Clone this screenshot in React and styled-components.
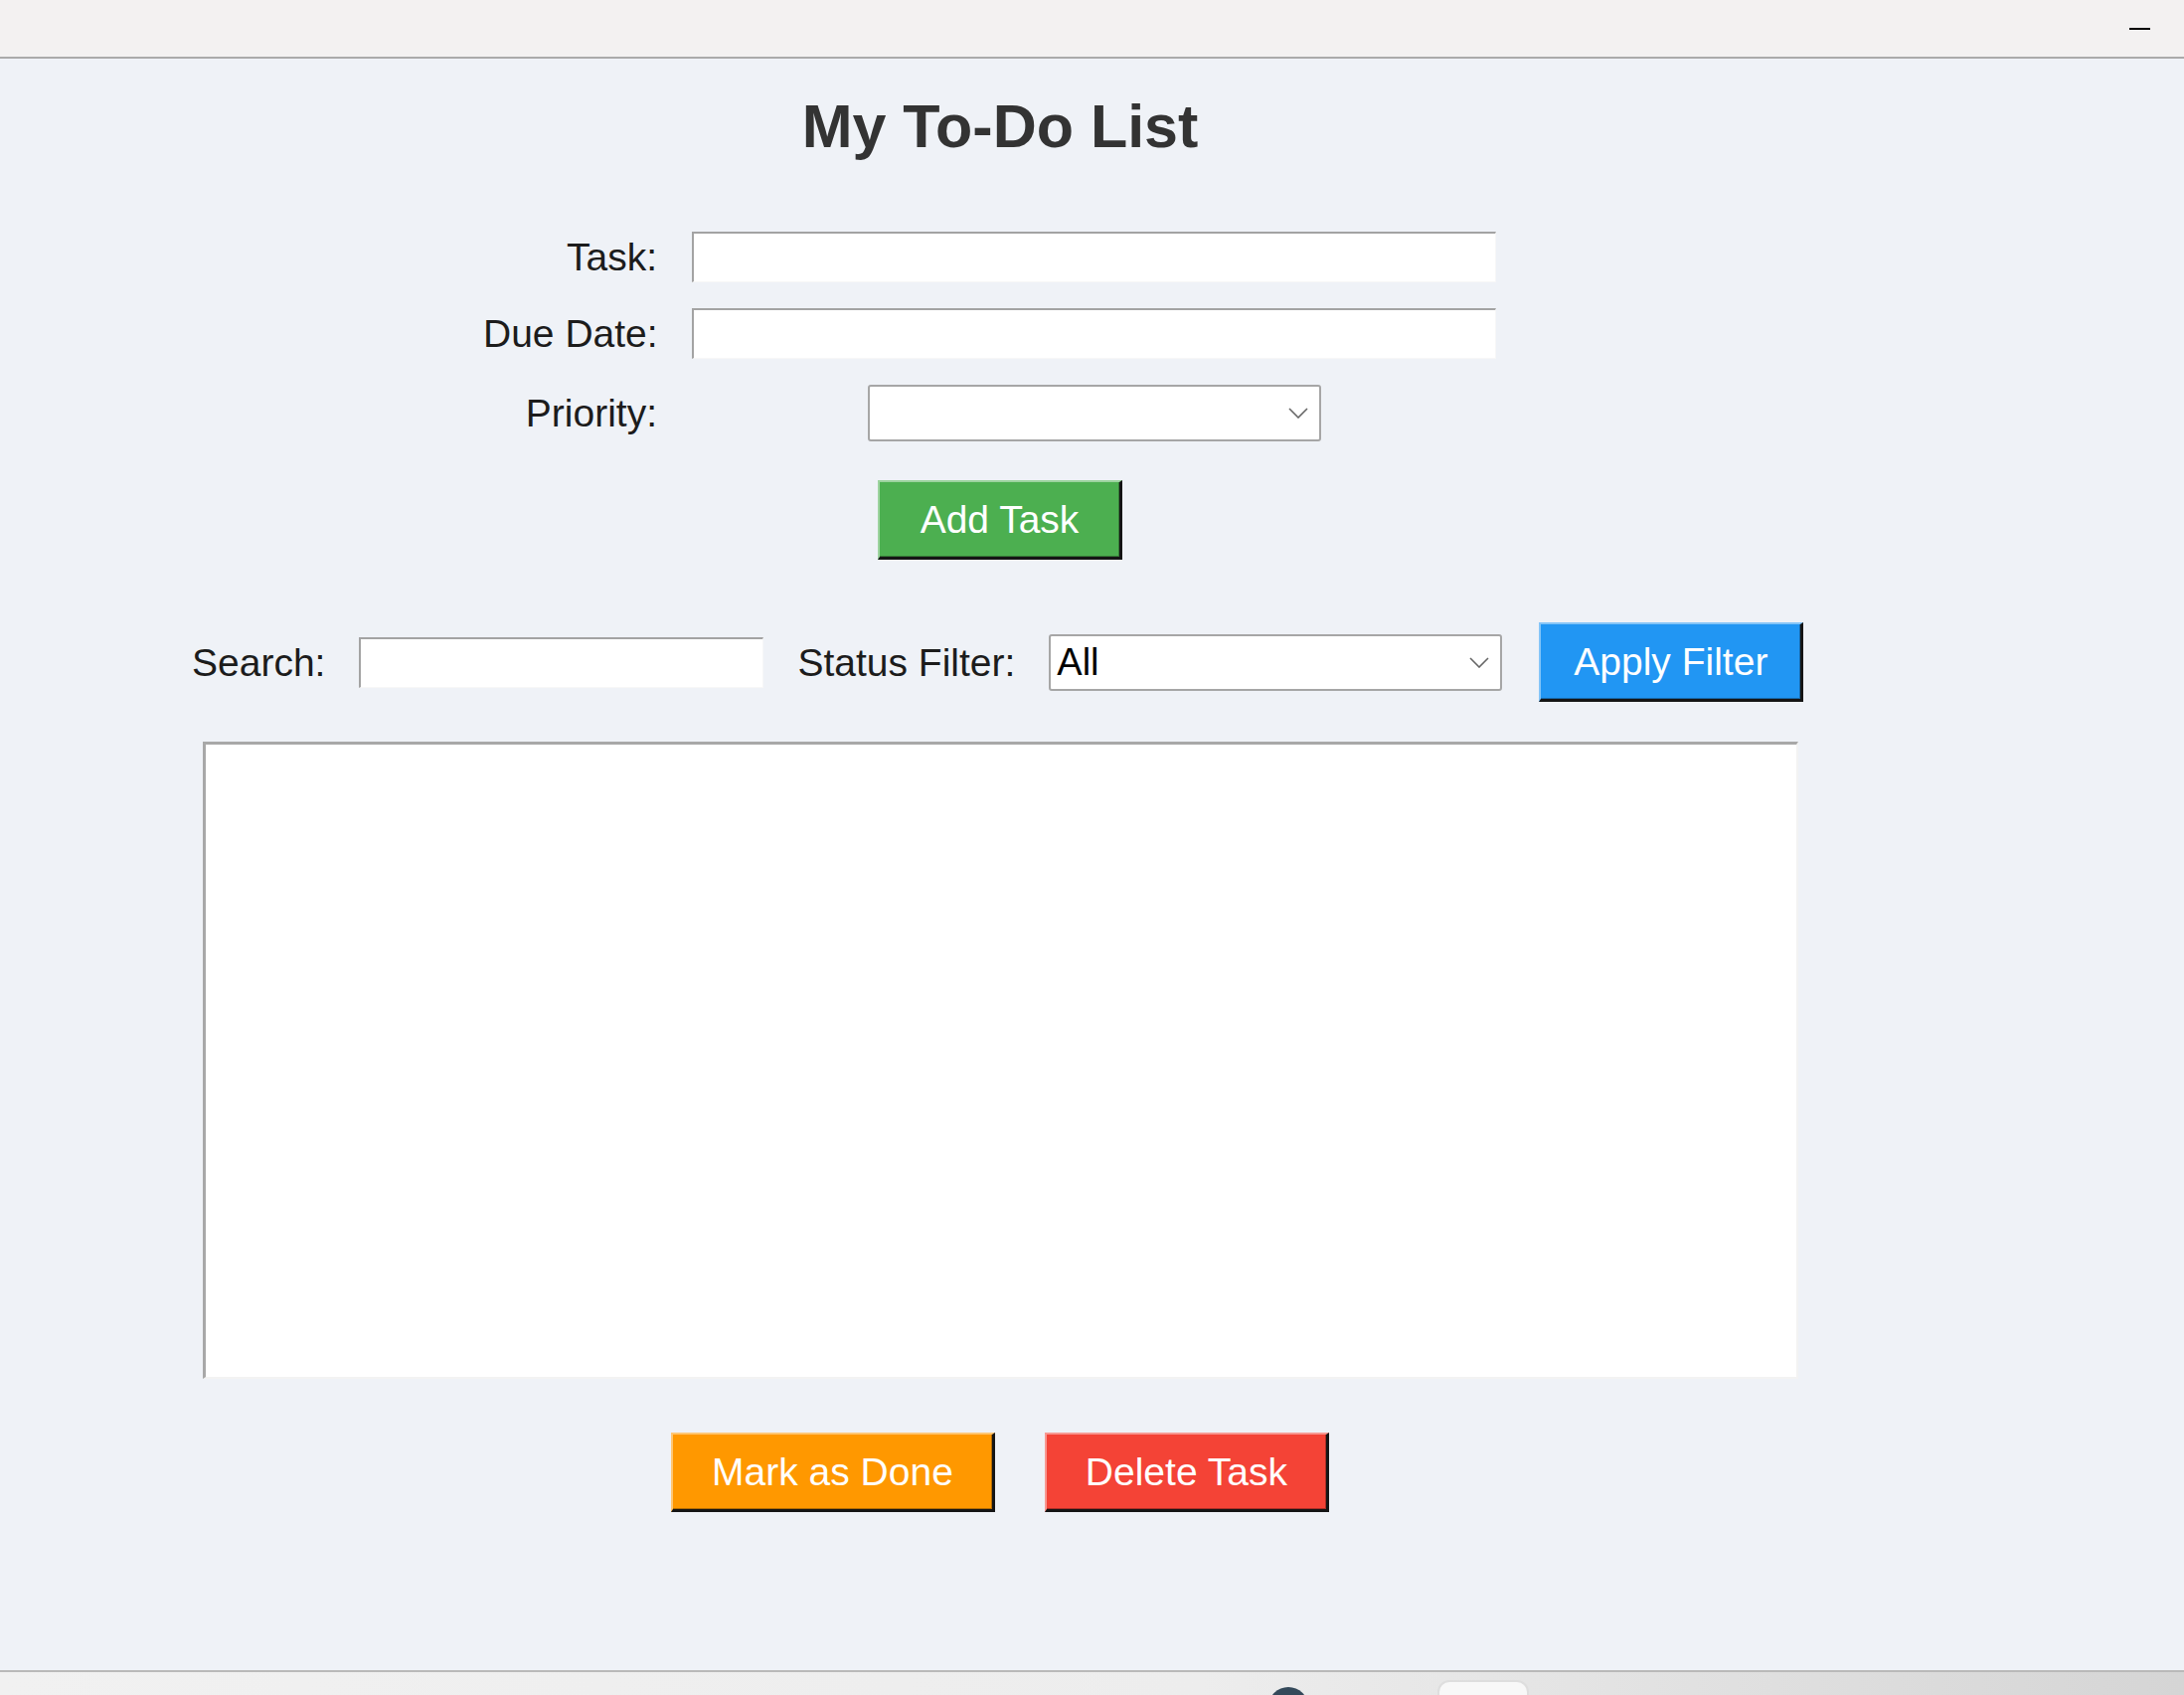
import React from "react";
import styled, { createGlobalStyle } from "styled-components";

// Button colours (material palette, as in the Tk app)
const buttonColors = {
  green: "#4caf50",
  blue: "#2196f3",
  orange: "#ff9800",
  red: "#f44336",
};

const GlobalStyle = createGlobalStyle`
  html, body {
    margin: 0;
    padding: 0;
  }
  body {
    width: 2197px;
    height: 1705px;
    overflow: hidden;
    font-family: "Liberation Sans", Arial, sans-serif;
  }
`;

const Window = styled.div`
  width: 2197px;
  height: 1705px;
  display: flex;
  flex-direction: column;
  background: #eff2f7;
  overflow: hidden;
`;

const TitleBar = styled.div`
  flex: none;
  height: 57px;
  background: #f3f1f1;
  border-bottom: 2px solid #aaaaaa;
  display: flex;
  align-items: center;
  justify-content: flex-end;
  padding-right: 34px;
`;

const MinimizeDash = styled.span`
  width: 21px;
  height: 2px;
  background: #000;
`;

const Content = styled.div`
  flex: 1;
  padding-left: 193px;
`;

const Main = styled.div`
  width: 1626px;
  display: flex;
  flex-direction: column;
  align-items: center;
  padding-top: 33px;
`;

const Title = styled.h1`
  margin: 0;
  font-size: 61px;
  line-height: 70px;
  font-weight: bold;
  color: #333333;
`;

// Task / due date / priority form
const Form = styled.div`
  align-self: flex-start;
  margin: 71px 0 0 293px;
  display: grid;
  grid-template-columns: 175px 809px;
  column-gap: 35px;
  row-gap: 26px;
  align-items: center;
`;

const Label = styled.span`
  flex: none;
  font-size: 39px;
  line-height: 1;
  color: #1c1c1c;
  text-align: ${({ $align }) => $align || "left"};
  white-space: nowrap;
`;

const Entry = styled.input`
  flex: none;
  box-sizing: border-box;
  width: ${({ $width }) => ($width ? `${$width}px` : "100%")};
  height: 51px;
  margin: 0;
  padding: 0 6px;
  background: #fff;
  border-style: solid;
  border-width: 2px 1px 1px 2px;
  border-color: #a3a3a3 #f7f7f7 #f7f7f7 #a3a3a3;
  font-family: inherit;
  font-size: 39px;
  outline: none;
`;

const ComboBox = styled.div`
  flex: none;
  box-sizing: border-box;
  width: 456px;
  height: 57px;
  justify-self: center;
  display: flex;
  align-items: center;
  justify-content: space-between;
  padding: 0 11px 0 6px;
  background: #fff;
  border: 2px solid #a6a6a6;
  border-radius: 3px;
`;

const ComboValue = styled.span`
  font-size: 38px;
  line-height: 1;
  color: #000;
`;

const Chevron = styled.svg`
  width: 20px;
  height: 11px;
  flex: none;
`;

const ButtonRow = styled.div`
  display: flex;
  gap: 50px;
  margin-top: ${({ $top }) => $top}px;
`;

const TkButton = styled.button`
  flex: none;
  box-sizing: border-box;
  height: 80px;
  margin: 0 0 0 ${({ $shift }) => $shift || 0}px;
  padding: 0 ${({ $padX }) => $padX || 39}px;
  background: ${({ $color }) => buttonColors[$color]};
  color: #fff;
  font-family: inherit;
  font-size: 39px;
  line-height: 1;
  white-space: nowrap;
  border-style: solid;
  border-width: 2px 3px 3px 2px;
  border-color: rgba(255, 255, 255, 0.45) #151515 #151515 rgba(255, 255, 255, 0.45);
  box-shadow: inset -1px -1px 0 rgba(0, 0, 0, 0.3);
  cursor: pointer;
`;

const FilterRow = styled.div`
  align-self: stretch;
  display: flex;
  align-items: center;
  gap: 34px;
  margin-top: 63px;
  height: 80px;
`;

const ListBox = styled.div`
  box-sizing: border-box;
  width: 1605px;
  height: 641px;
  margin-top: 40px;
  background: #fff;
  border-style: solid;
  border-width: 3px 2px 2px 3px;
  border-color: #a8a8a8 #f3f3f3 #f3f3f3 #a8a8a8;
`;

const TaskBar = styled.div`
  flex: none;
  height: 23px;
  border-top: 2px solid #b9b9b9;
  background: linear-gradient(to right, #f1f1f1 0%, #ededed 55%, #d5d5d5 100%);
  display: flex;
  align-items: flex-start;
  padding-left: 1276px;
  overflow: hidden;
`;

const TrayDot = styled.div`
  width: 40px;
  height: 40px;
  margin-top: 15px;
  border-radius: 50%;
  background: #34495a;
  flex: none;
`;

const TrayTile = styled.div`
  box-sizing: border-box;
  width: 92px;
  height: 40px;
  margin: 8px 0 0 130px;
  border: 2px solid #dedede;
  border-radius: 12px;
  background: #f8f8f8;
  flex: none;
`;

function DropArrow() {
  return (
    <Chevron viewBox="0 0 20 11">
      <polyline
        points="1,1 10,10 19,1"
        fill="none"
        stroke="#666"
        strokeWidth="1.6"
      />
    </Chevron>
  );
}

export default function App() {
  return (
    <>
      <GlobalStyle />
      <Window>
        <TitleBar>
          <MinimizeDash />
        </TitleBar>
        <Content>
          <Main>
            <Title>My To-Do List</Title>

            <Form>
              <Label $align="right">Task:</Label>
              <Entry type="text" />
              <Label $align="right">Due Date:</Label>
              <Entry type="text" />
              <Label $align="right">Priority:</Label>
              <ComboBox>
                <ComboValue />
                <DropArrow />
              </ComboBox>
            </Form>

            <ButtonRow $top={39}>
              <TkButton $color="green" $padX={41}>
                Add Task
              </TkButton>
            </ButtonRow>

            <FilterRow>
              <Label>Search:</Label>
              <Entry type="text" $width={407} />
              <Label>Status Filter:</Label>
              <ComboBox>
                <ComboValue>All</ComboValue>
                <DropArrow />
              </ComboBox>
              <TkButton $color="blue" $padX={33} $shift={3}>
                Apply Filter
              </TkButton>
            </FilterRow>

            <ListBox />

            <ButtonRow $top={54}>
              <TkButton $color="orange">Mark as Done</TkButton>
              <TkButton $color="red">Delete Task</TkButton>
            </ButtonRow>
          </Main>
        </Content>
        <TaskBar>
          <TrayDot />
          <TrayTile />
        </TaskBar>
      </Window>
    </>
  );
}
